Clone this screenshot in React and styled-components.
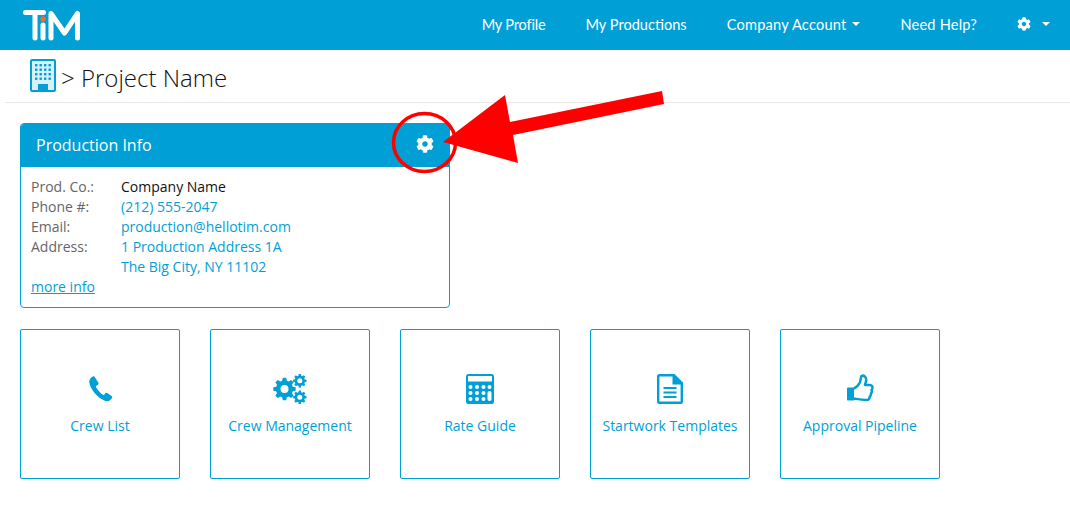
import React from "react";
import styled, { createGlobalStyle } from "styled-components";
import { FaCog } from "react-icons/fa";

const Global = createGlobalStyle`
  html, body { margin: 0; padding: 0; background: #fff; }
  body { font-family: "Open Sans", "Liberation Sans", sans-serif; font-size: 14px; color: #222; }
`;
const BLUE = "#009fd6";
const Page = styled.div`position: relative; width: 1070px; height: 505px; overflow: hidden;`;
const NavBar = styled.header`height: 50px; background: ${BLUE}; display: flex; align-items: center; justify-content: space-between; padding: 0 20px 0 23px;`;
const NavList = styled.nav`display: flex; align-items: center; gap: 40px; font-family: Lato, "Open Sans", sans-serif; font-size: 14.6px; color: #fff; padding-bottom: 2px;`;
const NavItem = styled.span`display: inline-flex; align-items: center; letter-spacing: ${p => p.$track || 0}px;`;
const Caret = styled.i`display: inline-block; width: 0; height: 0; margin-left: ${p => p.$gap || 6}px; border-left: 4px solid transparent; border-right: 4px solid transparent; border-top: 4px solid #fff;`;
const Crumb = styled.div`height: 53px; box-sizing: border-box; margin-left: 5px; padding: 2px 0 0 25px; border-bottom: 1px solid #e7e7e7; display: flex; align-items: center; gap: 5px; font-weight: 300; font-size: 24px; color: #111;`;
const BuildingMark = styled.svg`margin-top: -4px;`;
const Panel = styled.section`width: 430px; height: 185px; margin: 20px 0 0 20px; border: 1px solid ${BLUE}; border-radius: 4px; box-sizing: border-box; overflow: hidden;`;
const PanelHead = styled.div`height: 43px; box-sizing: border-box; padding: 0 15px 2px; background: ${BLUE}; color: #fff; display: flex; align-items: center; font-size: 16px; font-weight: 500;`;
const PanelBody = styled.div`padding: 10px; font-size: 14px; line-height: 20px;`;
const InfoGrid = styled.dl`display: grid; grid-template-columns: 90px 1fr; margin: 0;`;
const Label = styled.dt`color: #666;`;
const Value = styled.dd`margin: 0; color: ${p => (p.$plain ? "#111" : BLUE)};`;
const More = styled.a`color: ${BLUE}; text-decoration: underline;`;
const Tiles = styled.div`display: flex; gap: 30px; margin: 21px 0 0 20px;`;
const Tile = styled.div`width: 160px; height: 150px; box-sizing: border-box; border: 1px solid ${BLUE}; border-radius: 2px; display: flex; flex-direction: column; align-items: center; color: ${BLUE}; padding-top: 44px;`;
const TileIcon = styled.div`height: 32px; display: flex; align-items: flex-start; justify-content: center;`;
const TileLabel = styled.div`margin-top: 10px; font-size: 14px; line-height: 20px;`;
const Annotation = styled.svg`position: absolute; left: 0; top: 0; pointer-events: none;`;

const gearPath = (cx, cy, r, hole, teeth) => {
  const pts = [];
  const step = (Math.PI * 2) / teeth;
  const root = r * 0.76;
  for (let i = 0; i < teeth; i++) {
    const a = i * step - Math.PI / 2;
    const offs = [[-0.3, root], [-0.17, r], [0.17, r], [0.3, root]];
    offs.forEach(([o, rad]) => {
      const t = a + o * step * 1.15;
      pts.push(`${(cx + rad * Math.cos(t)).toFixed(2)} ${(cy + rad * Math.sin(t)).toFixed(2)}`);
    });
  }
  const ring = `M${cx - hole} ${cy}a${hole} ${hole} 0 1 0 ${hole * 2} 0a${hole} ${hole} 0 1 0 ${-hole * 2} 0Z`;
  return `M${pts.join("L")}Z${ring}`;
};

const Logo = () => (
  <svg width="58" height="31" viewBox="0 0 58 31">
    <g fill="none" stroke="#fff" strokeWidth="5" strokeLinejoin="round" strokeLinecap="round">
      <path d="M2.5 2.5H20.5M12 2.5V28" />
      <path d="M20 15V28" />
      <path d="M28 28V3.5L41.5 23L54.5 3.5V28" />
    </g>
    <circle cx="20" cy="9" r="2.7" fill="#f26a35" />
  </svg>
);
const Building = () => (
  <BuildingMark width="26" height="33" viewBox="0 0 26 33">
    <rect x="1" y="1" width="24" height="31" rx="1" fill="#d7f0fa" stroke={BLUE} strokeWidth="2" />
    <g fill={BLUE}>
      {[5, 9.5, 14, 18.5].map(y => [5, 9.5, 14, 18.5].map(x => <rect key={x + "-" + y} x={x} y={y} width="2.4" height="2.4" />))}
      <path d="M8 31V25H18V31Z" />
    </g>
  </BuildingMark>
);
const Phone = () => (
  <svg width="28" height="30" viewBox="0 0 28 30" fill={BLUE}>
    <path d="M7 2.5C5.3 3.3 3 5.4 3.3 8.3C3.8 14 11 24.2 19.5 27C22.4 28 25.5 25.6 26.2 23.5C26.4 22.8 26.1 22.3 25.5 21.9L21.3 19.1C20.6 18.6 19.9 18.7 19.4 19.3L17.8 21.2C14.8 19.8 10.8 15 9.8 12.2L11.9 10.8C12.6 10.3 12.7 9.5 12.4 8.8L9 3.4C8.5 2.4 8 2 7 2.5Z" />
  </svg>
);
const Gears = () => (
  <svg width="34" height="30" viewBox="0 0 34 30" fill={BLUE} fillRule="evenodd">
    <path d={gearPath(11.5, 15, 11.3, 4, 8)} />
    <path d={gearPath(26.8, 6.8, 6.8, 2.5, 8)} />
    <path d={gearPath(26.8, 23.2, 6.8, 2.5, 8)} />
  </svg>
);
const Calculator = () => (
  <svg width="28" height="30" viewBox="0 0 28 30">
    <rect x="0" y="0" width="28" height="30" rx="2.5" fill={BLUE} />
    <rect x="2" y="2" width="24" height="5.5" rx="0.5" fill="#fff" />
    <g fill="#fff">
      {[13, 19, 25].map(y => [4.5, 11, 17.5].map(x => <circle key={x + "-" + y} cx={x} cy={y} r="2" />))}
      <circle cx="23.5" cy="13" r="2" />
      <rect x="21.5" y="17" width="4" height="10" rx="2" />
    </g>
  </svg>
);
const FileDoc = () => (
  <svg width="26" height="30" viewBox="0 0 26 30" fill="none" stroke={BLUE}>
    <path d="M1.2 2.2C1.2 1.6 1.6 1.2 2.2 1.2H17L24.8 9V27.8C24.8 28.4 24.4 28.8 23.8 28.8H2.2C1.6 28.8 1.2 28.4 1.2 27.8Z" strokeWidth="2.4" />
    <path d="M16.5 1.5V9.5H24.5" strokeWidth="2" fill={BLUE} />
    <path d="M6.5 14H19.5M6.5 18.5H19.5M6.5 23H19.5" strokeWidth="2" />
  </svg>
);
const Thumb = () => (
  <svg width="28" height="28" viewBox="0 0 28 28">
    <path d="M1 14.5C1 13.9 1.4 13.5 2 13.5H8V26.5H2C1.4 26.5 1 26.1 1 25.5Z" fill={BLUE} />
    <path d="M8 14.5C10.5 13.5 12.3 11.5 13.8 8.5C14.6 6.8 14.5 4.5 15.4 2C17.8 0.8 20.5 3 20.2 6.5C20 8.3 19.2 9.5 19 11H24C25.8 11 26.8 12.6 26.4 14.2C26.2 15 25.9 15.5 25.5 16C26.2 17.3 25.8 18.7 24.9 19.5C25.2 20.9 24.6 22 23.7 22.6C23.8 24.8 22.5 26 20.5 26C15 26 12 25.2 8 24.5" fill="none" stroke={BLUE} strokeWidth="2.5" strokeLinejoin="round" />
  </svg>
);

const tiles = [
  ["Crew List", <Phone />],
  ["Crew Management", <Gears />],
  ["Rate Guide", <Calculator />],
  ["Startwork Templates", <FileDoc />],
  ["Approval Pipeline", <Thumb />],
];

export default function App() {
  return (
    <Page>
      <Global />
      <NavBar>
        <Logo />
        <NavList>
          <NavItem $track={-0.2}>My Profile</NavItem>
          <NavItem>My Productions</NavItem>
          <NavItem $track={0.2}>Company Account<Caret /></NavItem>
          <NavItem $track={0.2}>Need Help?</NavItem>
          <NavItem><FaCog size={14} /><Caret $gap={11} /></NavItem>
        </NavList>
      </NavBar>
      <Crumb><Building /> &gt; Project Name</Crumb>
      <Panel>
        <PanelHead>Production Info</PanelHead>
        <PanelBody>
          <InfoGrid>
            <Label>Prod. Co.:</Label><Value $plain>Company Name</Value>
            <Label>Phone #:</Label><Value>(212) 555-2047</Value>
            <Label>Email:</Label><Value>production@hellotim.com</Value>
            <Label>Address:</Label><Value>1 Production Address 1A</Value>
            <Label />
            <Value>The Big City, NY 11102</Value>
          </InfoGrid>
          <More>more info</More>
        </PanelBody>
      </Panel>
      <Tiles>
        {tiles.map(([label, icon]) => (
          <Tile key={label}>
            <TileIcon>{icon}</TileIcon>
            <TileLabel>{label}</TileLabel>
          </Tile>
        ))}
      </Tiles>
      <Annotation width="1070" height="505" viewBox="0 0 1070 505">
        <FaCog x="416" y="135" size={18} color="#fff" />
        <ellipse cx="424.5" cy="142.5" rx="31" ry="29" fill="none" stroke="#f00" strokeWidth="3.5" />
        <path d="M443 142 L505 95 L510 122 L662 91 L664 104 L513 135 L518 163Z" fill="#f00" />
      </Annotation>
    </Page>
  );
}
